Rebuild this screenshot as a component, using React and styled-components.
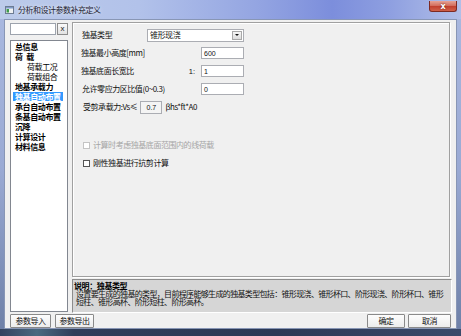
import React from "react";
import styled, { createGlobalStyle } from "styled-components";

const GlobalStyle = createGlobalStyle`
  html, body { margin: 0; padding: 0; }
  body {
    width: 461px; height: 336px; overflow: hidden;
    font-family: "Noto Sans CJK SC", "Noto Sans", sans-serif;
    background: #ffffff;
  }
`;

const Window = styled.div`
  width: 461px; height: 336px; box-sizing: border-box;
  display: flex; flex-direction: column;
  background: linear-gradient(to bottom, #aab9e0 0%, #9aaad4 50%, #6d7fa6 100%);
`;

const TitleBar = styled.div`
  height: 19px; flex: none; display: flex; align-items: center;
  padding-left: 5px; position: relative;
  background: linear-gradient(to right, #bccbea 0%, #b2c2ea 30%, #95a6e2 55%, #7c8edc 72%, #8d9ee0 84%, #b1bfe8 100%);
`;

const TitleText = styled.span`
  font-size: 8px; letter-spacing: -0.5px; color: #1f2430; margin-left: 4px; line-height: 1;
  text-shadow: 0 0 4px rgba(255,255,255,0.8);
`;

const CloseButton = styled.div`
  position: absolute; right: 4px; top: 1px; width: 28px; height: 11px;
  box-sizing: border-box; border: 1px solid #7d2a22; border-top: none;
  border-radius: 0 0 3px 3px;
  background: linear-gradient(to bottom, #e6a396 0%, #d4705f 45%, #c2412f 55%, #d0614a 100%);
  display: flex; align-items: center; justify-content: center;
  color: #fff; font-family: "DejaVu Sans", sans-serif; font-size: 8px; font-weight: bold;
  text-shadow: 0 0 2px #5a1810;
`;

const Body = styled.div`
  flex: 1; display: flex; padding: 0 4px;
`;

const Client = styled.div`
  flex: 1; box-sizing: border-box; border: 1px solid #8896b5;
  background: #f0f0f0; display: flex; flex-direction: column;
`;

const BottomFrame = styled.div`
  height: 7px; flex: none;
  background: linear-gradient(to right, #34425f 0%, #4a6a80 8%, #2f3d5a 16%, #2c3955 60%, #3a4a6a 100%);
`;

const MainRow = styled.div`
  display: flex; margin-top: 2px; height: 291px;
`;

const LeftColumn = styled.div`
  margin-left: 5px; width: 58px; display: flex; flex-direction: column;
`;

const SearchRow = styled.div`
  display: flex; gap: 1px; margin-top: 1px; height: 12px;
`;

const SearchInput = styled.div`
  width: 46px; box-sizing: border-box; background: #fff;
  border: 1px solid #9da3ad;
`;

const SmallButton = styled.div`
  width: 11px; box-sizing: border-box; border: 1px solid #8d8d8d;
  background: linear-gradient(#fafafa, #e2e2e2);
  display: flex; align-items: center; justify-content: center;
  font-family: "Liberation Sans", sans-serif; font-size: 8px; color: #222; line-height: 1;
`;

const ListBox = styled.div`
  margin-top: 5px; margin-bottom: 1px; flex: 1; box-sizing: border-box;
  background: #fff; border: 1px solid #828790;
  display: flex; flex-direction: column;
`;

const ListItem = styled.div`
  height: 10px; display: flex; align-items: center;
  padding-left: ${p => (p.$sub ? "14px" : "2px")};
`;

const ItemText = styled.span`
  display: inline-block; padding: 0 2px; height: 9px; line-height: 9px;
  font-size: 8px; letter-spacing: -0.4px; font-weight: ${p => (p.$sub ? 400 : 700)};
  color: ${p => (p.$selected ? "#fff" : "#000")};
  background: ${p => (p.$selected ? "#3399ff" : "transparent")};
  white-space: nowrap;
`;

const RightColumn = styled.div`
  margin-left: 4px; width: 380px; display: flex; flex-direction: column;
`;

const Group = styled.div`
  width: 378px; height: 255px; box-sizing: border-box;
  border: 1px solid #a0a0a0; box-shadow: inset 1px 1px 0 #fff, 1px 1px 0 #fff;
  padding: 3px 0 0 8px; display: flex; flex-direction: column;
`;

const FormRow = styled.div`
  width: 163px; height: 18px; display: flex; align-items: center; gap: ${p => p.$gap || 0}px;
`;

const Label = styled.span`
  font-size: 8px; letter-spacing: -0.45px; color: #111; white-space: nowrap; line-height: 1;
  margin-right: ${p => (p.$push ? "auto" : "0")};
  padding-left: ${p => p.$indent || 0}px;
`;

const Suffix = styled.span`
  font-size: 7.5px; color: #111; margin-right: 6px; font-family: "Liberation Sans", sans-serif;
`;

const TextBox = styled.div`
  width: ${p => p.$w || 43}px; height: ${p => p.$h || 12}px; box-sizing: border-box;
  background: ${p => p.$bg || "#fff"}; border: 1px solid #abadb3;
  display: flex; align-items: center; padding-left: ${p => p.$pl ?? 2}px;
  justify-content: ${p => (p.$center ? "center" : "flex-start")};
  font-family: "Liberation Sans", sans-serif; font-size: 7px; color: #111;
`;

const Select = styled.div`
  width: 97px; height: 13px; box-sizing: border-box; background: #fff;
  border: 1px solid #abadb3; display: flex; align-items: center;
  padding-left: 2px; justify-content: space-between;
`;

const SelectText = styled.span`
  font-size: 8px; letter-spacing: -0.45px; color: #111; line-height: 1;
`;

const DropButton = styled.div`
  width: 10px; height: 9px; margin-right: 1px; box-sizing: border-box;
  border: 1px solid #a9a9a9; background: linear-gradient(#f6f6f6, #dcdcdc);
  display: flex; align-items: center; justify-content: center;
`;

const Arrow = styled.div`
  width: 0; height: 0; border-left: 2px solid transparent; border-right: 2px solid transparent;
  border-top: 2px solid #111;
`;

const CheckRow = styled.div`
  display: flex; align-items: center; height: 18px; margin-top: ${p => p.$mt || 0}px;
  padding-left: 2px; gap: 3px;
`;

const CheckBox = styled.div`
  width: 7px; height: 7px; box-sizing: border-box; background: #fff;
  border: 1px solid ${p => (p.$disabled ? "#c4c4c4" : "#555")};
`;

const CheckLabel = styled.span`
  font-size: 8px; letter-spacing: -0.45px; line-height: 1;
  color: ${p => (p.$disabled ? "#a5a5a5" : "#111")};
`;

const Desc = styled.div`
  margin-top: 2px; height: 34px; box-sizing: border-box; background: #d6d6d6;
  border: 1px solid #8c8c8c; border-right-color: #fff; border-bottom-color: #fff;
  padding: 1px 0 0 1px; overflow: hidden;
`;

const DescTitle = styled.div`
  font-size: 8px; letter-spacing: -0.4px; font-weight: 700; line-height: 9px; height: 9px; color: #000;
`;

const DescLine = styled.div`
  font-size: 8px; letter-spacing: -0.66px; line-height: 8px; height: 8px; color: #111; padding-left: 2px;
  white-space: nowrap;
`;

const BottomRow = styled.div`
  flex: 1; display: flex; align-items: center; padding: 0 0 0 5px;
`;

const Button = styled.div`
  width: ${p => p.$w}px; height: 14px; box-sizing: border-box; margin-left: ${p => p.$ml || 0}px;
  border: 1px solid #8a8a8a; border-radius: 1px;
  background: linear-gradient(#fdfdfd, #ececec);
  display: flex; align-items: center; justify-content: center;
  font-size: 8px; letter-spacing: -0.45px; color: #111; line-height: 1;
`;

const listItems = [
  { t: "总信息" },
  { t: "荷\u2002载" },
  { t: "荷载工况", sub: true },
  { t: "荷载组合", sub: true },
  { t: "地基承载力" },
  { t: "独基自动布置", selected: true },
  { t: "承台自动布置" },
  { t: "条基自动布置" },
  { t: "沉降" },
  { t: "计算设计" },
  { t: "材料信息" },
];

function AppIcon() {
  return (
    <svg width="9" height="8" viewBox="0 0 9 8">
      <rect x="0.5" y="0.5" width="8" height="7" fill="#eef0f2" stroke="#6d7c93" />
      <rect x="1" y="1" width="7" height="1.5" fill="#7f9cc8" />
      <rect x="1.5" y="3" width="2.5" height="3.5" fill="#3c9a4a" />
    </svg>
  );
}

export default function App() {
  return (
    <>
      <GlobalStyle />
      <Window>
        <TitleBar>
          <AppIcon />
          <TitleText>分析和设计参数补充定义</TitleText>
          <CloseButton>x</CloseButton>
        </TitleBar>
        <Body>
          <Client>
            <MainRow>
              <LeftColumn>
                <SearchRow>
                  <SearchInput />
                  <SmallButton>x</SmallButton>
                </SearchRow>
                <ListBox>
                  {listItems.map((it, i) => (
                    <ListItem key={i} $sub={it.sub}>
                      <ItemText $sub={it.sub} $selected={it.selected}>{it.t}</ItemText>
                    </ListItem>
                  ))}
                </ListBox>
              </LeftColumn>
              <RightColumn>
                <Group>
                  <FormRow>
                    <Label $push $indent={1}>独基类型</Label>
                    <Select>
                      <SelectText>锥形现浇</SelectText>
                      <DropButton><Arrow /></DropButton>
                    </Select>
                  </FormRow>
                  <FormRow>
                    <Label $push>独基最小高度[mm]</Label>
                    <TextBox>600</TextBox>
                  </FormRow>
                  <FormRow>
                    <Label $push>独基底面长宽比</Label>
                    <Suffix>1:</Suffix>
                    <TextBox>1</TextBox>
                  </FormRow>
                  <FormRow>
                    <Label $push $indent={1}>允许零应力区比值(0~0.3)</Label>
                    <TextBox>0</TextBox>
                  </FormRow>
                  <FormRow $gap={3}>
                    <Label $indent={2}>受剪承载力:Vs≤</Label>
                    <TextBox $w={22} $h={13} $bg="#f4f4f4" $center $pl={0}>0.7</TextBox>
                    <Label>βhs*ft*A0</Label>
                  </FormRow>
                  <CheckRow $mt={20}>
                    <CheckBox $disabled />
                    <CheckLabel $disabled>计算时考虑独基底面范围内的线荷载</CheckLabel>
                  </CheckRow>
                  <CheckRow>
                    <CheckBox />
                    <CheckLabel>刚性独基进行抗剪计算</CheckLabel>
                  </CheckRow>
                </Group>
                <Desc>
                  <DescTitle>说明：独基类型</DescTitle>
                  <DescLine>设置要生成的独基的类型，目前程序能够生成的独基类型包括：锥形现浇、锥形杯口、阶形现浇、阶形杯口、锥形</DescLine>
                  <DescLine>短柱、锥形高杯、阶形短柱、阶形高杯。</DescLine>
                </Desc>
              </RightColumn>
            </MainRow>
            <BottomRow>
              <Button $w={41}>参数导入</Button>
              <Button $w={39} $ml={4}>参数导出</Button>
              <Button $w={38} $ml={273}>确定</Button>
              <Button $w={43} $ml={3}>取消</Button>
            </BottomRow>
          </Client>
        </Body>
        <BottomFrame />
      </Window>
    </>
  );
}
